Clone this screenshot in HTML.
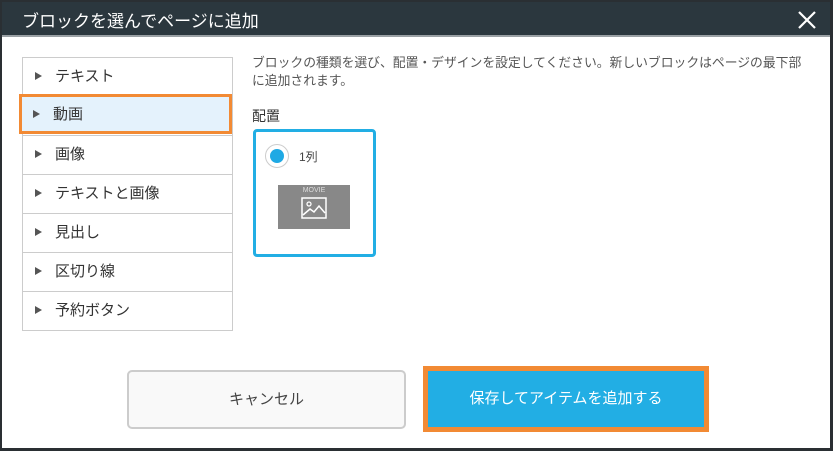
<!DOCTYPE html><html><head><style>
body{margin:0;width:833px;height:451px;background:#2a2f33;position:relative;overflow:hidden;font-family:"Liberation Sans","Noto Sans CJK JP",sans-serif}
.dlg{position:absolute;left:2px;top:2px;width:828px;height:446px;background:#fff}
.hd{position:absolute;left:0;top:0;width:828px;height:35px;background:#2b373e;border-bottom:2px solid #9aa0a4;box-sizing:border-box}
.hd span{position:absolute;left:20px;top:5px;color:#fff;font-size:17px}
.x{position:absolute;left:795px;top:8px}
.list{position:absolute;left:20px;top:55px;width:209px;border:1px solid #ccc;border-bottom:none}
.it{height:38px;border-bottom:1px solid #ccc;position:relative;font-size:15px;color:#333}
.it span{position:absolute;left:32px;top:7px}
.it i{position:absolute;left:12px;top:14px;width:0;height:0;border-left:7px solid #555;border-top:4px solid transparent;border-bottom:4px solid transparent}
.sel{position:absolute;left:17px;top:92px;width:213px;height:40px;border:3px solid #f28a34;box-sizing:border-box;background:#e4f2fc}
.txt{position:absolute;left:250px;top:52px;font-size:12.8px;color:#555;line-height:18px;white-space:nowrap}
.lbl{position:absolute;left:250px;top:104px;font-size:14px;color:#333}
.card{position:absolute;left:251px;top:127px;width:123px;height:128px;border:3px solid #22aee4;border-radius:4px;box-sizing:border-box}
.rad{position:absolute;left:9px;top:12px;width:22px;height:22px;border:1px solid #ccc;border-radius:50%}
.rad::after{content:"";position:absolute;left:4px;top:4px;width:14px;height:14px;border-radius:50%;background:#1fa9e4}
.c1{position:absolute;left:43px;top:16px;font-size:12px;color:#444}
.img{position:absolute;left:22px;top:53px;width:72px;height:44px;background:#888}
.img b{position:absolute;left:0;width:72px;top:2px;text-align:center;font-size:7px;color:#ddd;font-weight:normal}
.btn{position:absolute;box-sizing:border-box;text-align:center;font-size:15px}
</style></head><body>
<div class="dlg">
<div class="hd"><span>ブロックを選んでページに追加</span>
<svg class="x" width="20" height="20" viewBox="0 0 20 20"><path d="M2 2L18 18M18 2L2 18" stroke="#fff" stroke-width="2.2"/></svg></div>
<div class="list">
<div class="it"><i></i><span>テキスト</span></div>
<div class="it"><i></i><span>動画</span></div>
<div class="it"><i></i><span>画像</span></div>
<div class="it"><i></i><span>テキストと画像</span></div>
<div class="it"><i></i><span>見出し</span></div>
<div class="it"><i></i><span>区切り線</span></div>
<div class="it"><i></i><span>予約ボタン</span></div>
</div>
<div class="sel"><div class="it" style="border:none;height:34px"><i style="left:11px;top:13px"></i><span style="left:31px;top:6px">動画</span></div></div>
<div class="txt">ブロックの種類を選び、配置・デザインを設定してください。新しいブロックはページの最下部<br>に追加されます。</div>
<div class="lbl">配置</div>
<div class="card"><div class="rad"></div><div class="c1">1列</div>
<div class="img"><b>MOVIE</b><svg style="position:absolute;left:23px;top:12px" width="26" height="22" viewBox="0 0 26 22"><rect x="1" y="1" width="24" height="20" fill="none" stroke="#fff" stroke-width="1.5"/><circle cx="8" cy="7" r="2" fill="none" stroke="#fff" stroke-width="1.3"/><path d="M2 18L9 12L13 15L18 9L24 16" fill="none" stroke="#fff" stroke-width="1.5"/></svg></div></div>
<div class="btn" style="left:125px;top:368px;width:279px;height:59px;border:2px solid #ccc;border-radius:5px;background:#f9f9f9;color:#444;line-height:55px">キャンセル</div>
<div class="btn" style="left:421px;top:364px;width:286px;height:66px;border:5px solid #f28a34;background:#22aee4;color:#fff;line-height:56px">保存してアイテムを追加する</div>
</div>
</body></html>
